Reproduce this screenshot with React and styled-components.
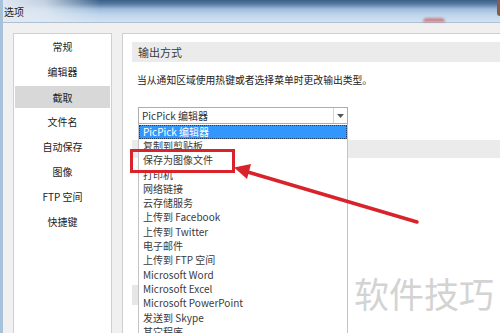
import React from "react";
import styled, { createGlobalStyle } from "styled-components";

const Global = createGlobalStyle`
  html, body { margin: 0; padding: 0; background: #f0f0f0; }
  body { font-family: "Noto Sans CJK SC", "Noto Sans", sans-serif; }
`;

const Window = styled.div`
  position: relative;
  width: 500px;
  height: 333px;
  overflow: hidden;
  background: #f0f0f0;
  display: flex;
  flex-direction: column;
  border-left: 3px solid #a9c2dc;
  box-sizing: border-box;
`;

const TitleBar = styled.div`
  height: 23px;
  flex: none;
  margin-left: -3px;
  display: flex;
  align-items: center;
  box-sizing: border-box;
  border-bottom: 1px solid #aebfd2;
  background:
    linear-gradient(to right, rgba(226,234,243,1) 0px, rgba(226,234,243,0.8) 45px, rgba(226,234,243,0) 100px),
    linear-gradient(to bottom, #3c5f8a 0px, #56799f 4px, #9dbbdb 9px, #bcd3ea 14px, #d3e2f1 22px);
`;

const Title = styled.span`
  font-size: 10px;
  color: #1e1e1e;
  padding-left: 4px;
  line-height: 23px;
`;

const Spacer = styled.div`
  flex: 1;
`;

const CloseGlow = styled.div`
  width: 22px;
  height: 4px;
  margin-right: 52px;
  align-self: flex-end;
  border-radius: 6px 6px 0 0;
  background: rgba(200, 60, 60, 0.55);
  filter: blur(1px);
`;

const CornerEdge = styled.div`
  width: 3px;
  height: 16px;
  align-self: flex-start;
  background: #8a5a4a;
  border-radius: 0 0 0 3px;
`;

const Body = styled.div`
  flex: 1;
  display: flex;
  gap: 10px;
  padding: 10px 0 0 10px;
  min-height: 0;
`;

const Nav = styled.div`
  width: 99px;
  flex: none;
  background: #fff;
  border: 1px solid #cfcfcf;
  border-bottom: none;
  box-sizing: border-box;
  display: flex;
  flex-direction: column;
`;

const NavItem = styled.div`
  height: ${(p) => (p.$selected ? "22px" : "25px")};
  margin: ${(p) => (p.$selected ? "2px 1px 1px 1px" : "0")};
  background: ${(p) => (p.$selected ? "#d8d8d8" : "transparent")};
  display: flex;
  align-items: center;
  justify-content: center;
  font-size: 10px;
  color: #222;
  padding-top: ${(p) => (p.$selected ? "1px" : "0")};
  box-sizing: border-box;
`;

const Panel = styled.div`
  flex: 1;
  background: #fff;
  border: 1px solid #cfcfcf;
  border-right: none;
  border-bottom: none;
  padding: 8px 0 0 9px;
  display: flex;
  flex-direction: column;
  align-items: flex-start;
`;

const SectionHeader = styled.div`
  align-self: stretch;
  height: ${(p) => p.$h || 20}px;
  margin-top: ${(p) => p.$mt || 0}px;
  background: #ebebeb;
  font-size: 11px;
  color: #3a3a3a;
  line-height: ${(p) => p.$h || 20}px;
  padding-left: 6px;
`;

const Description = styled.div`
  margin-top: 10px;
  padding-left: 5px;
  font-size: 9.8px;
  line-height: 16px;
  color: #222;
  white-space: nowrap;
`;

const ComboWrap = styled.div`
  position: relative;
  margin: 19px 0 0 6px;
  width: 210px;
`;

const Combo = styled.div`
  height: 17px;
  box-sizing: border-box;
  border: 1px solid #adadad;
  background: #fff;
  display: flex;
  align-items: center;
`;

const ComboText = styled.span`
  flex: 1;
  font-size: 10px;
  color: #333;
  padding-left: 3px;
  line-height: 15px;
`;

const ComboButton = styled.div`
  width: 13px;
  height: 15px;
  border-left: 1px solid #d4d4d4;
  display: flex;
  align-items: center;
  justify-content: center;
`;

const DropList = styled.div`
  position: absolute;
  left: 0;
  top: 17px;
  width: 210px;
  box-sizing: border-box;
  background: #fff;
  border: 1px solid #c4c4c4;
  border-top: none;
  padding-top: 1px;
  z-index: 2;
`;

const ListItem = styled.div`
  height: ${(p) => (p.$selected ? "14px" : "14.3px")};
  box-sizing: border-box;
  font-size: 10px;
  line-height: ${(p) => (p.$selected ? "12px" : "14.3px")};
  white-space: nowrap;
  color: ${(p) => (p.$selected ? "#fff" : "#3a3a3a")};
  background: ${(p) => (p.$selected ? "#3297fd" : "transparent")};
  border: ${(p) => (p.$selected ? "1px dotted #1f3b66" : "none")};
  padding-left: ${(p) => (p.$selected ? "3px" : "4px")};
`;

const HiddenButton = styled.div`
  margin-top: 127px;
  width: 70px;
  height: 20px;
  background: #e6e6e6;
`;

const Annotation = styled.svg`
  position: absolute;
  left: -3px;
  top: 0;
  width: 500px;
  height: 333px;
  pointer-events: none;
  z-index: 5;
`;

const Watermark = styled.div`
  position: absolute;
  left: 351px;
  top: 275px;
  font-size: 35px;
  line-height: 1;
  color: #d3d3d3;
  z-index: 4;
  white-space: nowrap;
`;

const navItems = ["常规", "编辑器", "截取", "文件名", "自动保存", "图像", "FTP 空间", "快捷键"];

const listItems = [
  "PicPick 编辑器",
  "复制到剪贴板",
  "保存为图像文件",
  "打印机",
  "网络链接",
  "云存储服务",
  "上传到 Facebook",
  "上传到 Twitter",
  "电子邮件",
  "上传到 FTP 空间",
  "Microsoft Word",
  "Microsoft Excel",
  "Microsoft PowerPoint",
  "发送到 Skype",
  "其它程序",
];

export default function App() {
  return (
    <>
      <Global />
      <Window>
        <TitleBar>
          <Title>选项</Title>
          <Spacer />
          <CloseGlow />
          <CornerEdge />
        </TitleBar>
        <Body>
          <Nav>
            {navItems.map((n) => (
              <NavItem key={n} $selected={n === "截取"}>
                {n}
              </NavItem>
            ))}
          </Nav>
          <Panel>
            <SectionHeader>输出方式</SectionHeader>
            <Description>当从通知区域使用热键或者选择菜单时更改输出类型。</Description>
            <ComboWrap>
              <Combo>
                <ComboText>PicPick 编辑器</ComboText>
                <ComboButton>
                  <svg width="7" height="4" viewBox="0 0 7 4">
                    <path d="M0 0 L7 0 L3.5 4 Z" fill="#555" />
                  </svg>
                </ComboButton>
              </Combo>
              <DropList>
                {listItems.map((t, i) => (
                  <ListItem key={t} $selected={i === 0}>
                    {t}
                  </ListItem>
                ))}
              </DropList>
            </ComboWrap>
            <SectionHeader $h={18} $mt={16} />
            <HiddenButton />
          </Panel>
        </Body>
        <Annotation viewBox="0 0 500 333">
          <rect x="131.5" y="150.5" width="102" height="21" fill="none" stroke="#d8232a" strokeWidth="3" />
          <line x1="417" y1="222" x2="246" y2="171.5" stroke="#d8232a" strokeWidth="3.5" strokeLinecap="round" />
          <polygon points="234,167.5 251,164 247,179" fill="#d8232a" />
        </Annotation>
        <Watermark>软件技巧</Watermark>
      </Window>
    </>
  );
}
